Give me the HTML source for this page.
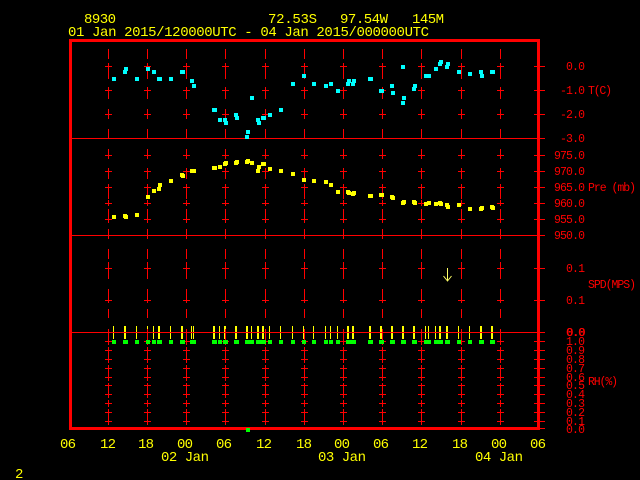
<!DOCTYPE html>
<html>
<head>
<meta charset="utf-8">
<title>8930</title>
<style>
html,body{margin:0;padding:0;background:#000;width:640px;height:480px;overflow:hidden}
svg{display:block}
text{font-family:"Liberation Mono",monospace;stroke:none}
.y text{fill:#ffff00;font-size:14px}
.r text{fill:#ff0000;font-size:11.5px}
</style>
</head>
<body>
<svg width="640" height="480" viewBox="0 0 640 480" xmlns="http://www.w3.org/2000/svg">
<rect width="640" height="480" fill="#000"/>

<!-- yellow bars -->
<path shape-rendering="crispEdges" stroke="#ffff00" stroke-width="1" fill="none" d="M113.5 326V339M124.5 326V339M125.5 326V339M136.5 326V339M147.5 326V339M153.5 326V339M158.5 326V339M159.5 326V339M170.5 326V339M181.5 326V339M182.5 326V339M191.5 326V339M193.5 326V339M213.5 326V339M214.5 326V339M219.5 326V339M224.5 326V339M225.5 326V339M235.5 326V339M236.5 326V339M246.5 326V339M247.5 326V339M251.5 326V339M257.5 326V339M258.5 326V339M262.5 326V339M263.5 326V339M269.5 326V339M280.5 326V339M292.5 326V339M303.5 326V339M313.5 326V339M325.5 326V339M330.5 326V339M337.5 326V339M347.5 326V339M348.5 326V339M352.5 326V339M353.5 326V339M369.5 326V339M370.5 326V339M380.5 326V339M381.5 326V339M391.5 326V339M392.5 326V339M402.5 326V339M403.5 326V339M413.5 326V339M414.5 326V339M425.5 326V339M428.5 326V339M435.5 326V339M439.5 326V339M440.5 326V339M446.5 326V339M447.5 326V339M458.5 326V339M469.5 326V339M480.5 326V339M481.5 326V339M491.5 326V339M492.5 326V339"/>

<defs>
<path id="c" d="M.5 49V59M.5 63V79M.5 87V99M.5 109V119M.5 129V138M.5 149V159M.5 168V179M.5 184V199M.5 200V206M.5 209V223M.5 229V239M.5 249V259M.5 262V279M.5 289V303M.5 309V318M.5 329V345M.5 347V363M.5 365V381M.5 383V398M.5 400V407M.5 409V425M-3 66.5h7M-3 90.5h7M-3 114.5h7M-3 155.5h7M-3 171.5h7M-3 187.5h7M-3 203.5h7M-3 219.5h7M-3 268.5h7M-3 300.5h7M-3 341.5h7M-3 350.5h7M-3 359.5h7M-3 368.5h7M-3 377.5h7M-3 385.5h7M-3 394.5h7M-3 403.5h7M-3 412.5h7M-3 421.5h7"/>
</defs>
<g shape-rendering="crispEdges" stroke="#ff0000" stroke-width="1" fill="none">
<use href="#c" x="108"/><use href="#c" x="147"/><use href="#c" x="186"/><use href="#c" x="225"/><use href="#c" x="265"/><use href="#c" x="304"/><use href="#c" x="343"/><use href="#c" x="382"/><use href="#c" x="421"/><use href="#c" x="461"/><use href="#c" x="500"/>
<!-- horizontal lines and right ticks -->
<path d="M72 138.5H545M72 235.5H545M72 332.5H545M534 66.5H545M534 90.5H545M534 114.5H545M534 155.5H545M534 171.5H545M534 187.5H545M534 203.5H545M534 219.5H545M534 268.5H545M534 300.5H545M534 341.5H545M534 350.5H545M534 359.5H545M534 368.5H545M534 377.5H545M534 385.5H545M534 394.5H545M534 403.5H545M534 412.5H545M534 421.5H545M534 428.5H545"/>
</g>
<!-- frame -->
<rect x="70.5" y="40.5" width="468" height="388" fill="none" stroke="#ff0000" stroke-width="3" shape-rendering="crispEdges"/>

<!-- cyan temperature -->
<path shape-rendering="crispEdges" stroke="#00ffff" stroke-width="4" fill="none" d="M112 79h4M123 72h4M124 69h4M135 79h4M146 69h4M152 72h4M157 79h4M158 79h4M169 79h4M180 72h4M181 72h4M190 81h4M192 86h4M212 110h4M213 110h4M218 120h4M223 120h4M224 123h4M234 115h4M235 118h4M250 98h4M246 132h4M245 137h4M256 120h4M257 123h4M261 118h4M262 118h4M268 115h4M279 110h4M291 84h4M302 76h4M312 84h4M324 86h4M329 84h4M336 91h4M346 84h4M347 81h4M351 84h4M352 81h4M368 79h4M369 79h4M379 91h4M380 91h4M390 86h4M391 93h4M401 67h4M402 98h4M401 103h4M412 89h4M413 86h4M424 76h4M427 76h4M434 69h4M438 64h4M439 62h4M446 64h4M445 67h4M457 72h4M468 74h4M479 72h4M480 76h4M490 72h4M491 72h4"/>

<!-- yellow pressure -->
<path shape-rendering="crispEdges" stroke="#ffff00" stroke-width="4" fill="none" d="M112 217h4M123 216h4M124 217h4M135 215h4M146 197h4M152 191h4M157 189h4M158 185h4M169 181h4M180 175h4M181 176h4M190 171h4M192 171h4M212 168h4M213 168h4M218 167h4M223 164h4M224 163h4M234 163h4M235 162h4M245 162h4M246 161h4M250 163h4M256 171h4M257 167h4M261 164h4M262 164h4M268 169h4M279 171h4M291 174h4M302 180h4M312 181h4M324 182h4M329 185h4M336 192h4M346 192h4M347 193h4M351 194h4M352 193h4M368 196h4M369 196h4M379 195h4M380 195h4M390 197h4M391 198h4M401 203h4M402 202h4M412 202h4M413 203h4M424 204h4M427 203h4M434 204h4M438 203h4M439 204h4M445 205h4M446 207h4M457 205h4M468 209h4M479 209h4M480 208h4M490 207h4M491 208h4"/>

<!-- green -->
<path shape-rendering="crispEdges" stroke="#00ff00" stroke-width="4" fill="none" d="M112 342h4M123 342h4M124 342h4M135 342h4M146 342h4M152 342h4M157 342h4M158 342h4M169 342h4M180 342h4M181 342h4M190 342h4M192 342h4M212 342h4M213 342h4M218 342h4M223 342h4M224 342h4M234 342h4M235 342h4M245 342h4M246 342h4M250 342h4M256 342h4M257 342h4M261 342h4M262 342h4M268 342h4M279 342h4M291 342h4M302 342h4M312 342h4M324 342h4M329 342h4M336 342h4M346 342h4M347 342h4M351 342h4M352 342h4M368 342h4M369 342h4M379 342h4M380 342h4M390 342h4M391 342h4M401 342h4M402 342h4M412 342h4M413 342h4M424 342h4M427 342h4M434 342h4M438 342h4M439 342h4M445 342h4M446 342h4M457 342h4M468 342h4M479 342h4M480 342h4M490 342h4M491 342h4M246 430h4"/>

<!-- wind arrow -->
<path d="M447.5 268V281M443.5 276L447.5 281L451.5 276" stroke="#ffff66" stroke-width="1" fill="none"/>

<!-- yellow text -->
<g class="y">
<text x="84" y="23" textLength="32" lengthAdjust="spacing">8930</text>
<text x="268" y="23" textLength="49" lengthAdjust="spacing">72.53S</text>
<text x="340" y="23" textLength="48" lengthAdjust="spacing">97.54W</text>
<text x="412" y="23" textLength="32" lengthAdjust="spacing">145M</text>
<text x="68" y="36" textLength="361" lengthAdjust="spacing">01 Jan 2015/120000UTC - 04 Jan 2015/000000UTC</text>
<text x="60" y="448" textLength="16" lengthAdjust="spacing">06</text>
<text x="100" y="448" textLength="16" lengthAdjust="spacing">12</text>
<text x="138" y="448" textLength="16" lengthAdjust="spacing">18</text>
<text x="177" y="448" textLength="16" lengthAdjust="spacing">00</text>
<text x="216" y="448" textLength="16" lengthAdjust="spacing">06</text>
<text x="256" y="448" textLength="16" lengthAdjust="spacing">12</text>
<text x="296" y="448" textLength="16" lengthAdjust="spacing">18</text>
<text x="334" y="448" textLength="16" lengthAdjust="spacing">00</text>
<text x="373" y="448" textLength="16" lengthAdjust="spacing">06</text>
<text x="412" y="448" textLength="16" lengthAdjust="spacing">12</text>
<text x="452" y="448" textLength="16" lengthAdjust="spacing">18</text>
<text x="491" y="448" textLength="16" lengthAdjust="spacing">00</text>
<text x="530" y="448" textLength="16" lengthAdjust="spacing">06</text>
<text x="161" y="461" textLength="48" lengthAdjust="spacing">02 Jan</text>
<text x="318" y="461" textLength="48" lengthAdjust="spacing">03 Jan</text>
<text x="475" y="461" textLength="48" lengthAdjust="spacing">04 Jan</text>
<text x="15" y="478">2</text>
</g>

<!-- red text -->
<g class="r">
<text x="566" y="70" textLength="19" lengthAdjust="spacing">0.0</text>
<text x="560" y="94" textLength="25" lengthAdjust="spacing">-1.0</text>
<text x="560" y="118" textLength="25" lengthAdjust="spacing">-2.0</text>
<text x="560" y="142" textLength="25" lengthAdjust="spacing">-3.0</text>
<text x="588" y="94" textLength="24" lengthAdjust="spacing">T(C)</text>
<text x="554" y="159" textLength="31" lengthAdjust="spacing">975.0</text>
<text x="554" y="175" textLength="31" lengthAdjust="spacing">970.0</text>
<text x="554" y="191" textLength="31" lengthAdjust="spacing">965.0</text>
<text x="554" y="207" textLength="31" lengthAdjust="spacing">960.0</text>
<text x="554" y="223" textLength="31" lengthAdjust="spacing">955.0</text>
<text x="554" y="239" textLength="31" lengthAdjust="spacing">950.0</text>
<text x="588" y="191" textLength="48" lengthAdjust="spacing">Pre (mb)</text>
<text x="566" y="272" textLength="19" lengthAdjust="spacing">0.1</text>
<text x="566" y="304" textLength="19" lengthAdjust="spacing">0.1</text>
<text x="588" y="288" textLength="48" lengthAdjust="spacing">SPD(MPS)</text>
<text x="566" y="336" textLength="19" lengthAdjust="spacing">0.0</text>
<text x="566.6" y="336" textLength="19" lengthAdjust="spacing">0.0</text>
<text x="566" y="345" textLength="19" lengthAdjust="spacing">1.0</text>
<text x="566" y="354" textLength="19" lengthAdjust="spacing">0.9</text>
<text x="566" y="363" textLength="19" lengthAdjust="spacing">0.8</text>
<text x="566" y="372" textLength="19" lengthAdjust="spacing">0.7</text>
<text x="566" y="381" textLength="19" lengthAdjust="spacing">0.6</text>
<text x="566" y="389" textLength="19" lengthAdjust="spacing">0.5</text>
<text x="566" y="398" textLength="19" lengthAdjust="spacing">0.4</text>
<text x="566" y="407" textLength="19" lengthAdjust="spacing">0.3</text>
<text x="566" y="416" textLength="19" lengthAdjust="spacing">0.2</text>
<text x="566" y="425" textLength="19" lengthAdjust="spacing">0.1</text>
<text x="566" y="433" textLength="19" lengthAdjust="spacing">0.0</text>
<text x="588" y="385" textLength="30" lengthAdjust="spacing">RH(%)</text>
</g>
</svg>
</body>
</html>
